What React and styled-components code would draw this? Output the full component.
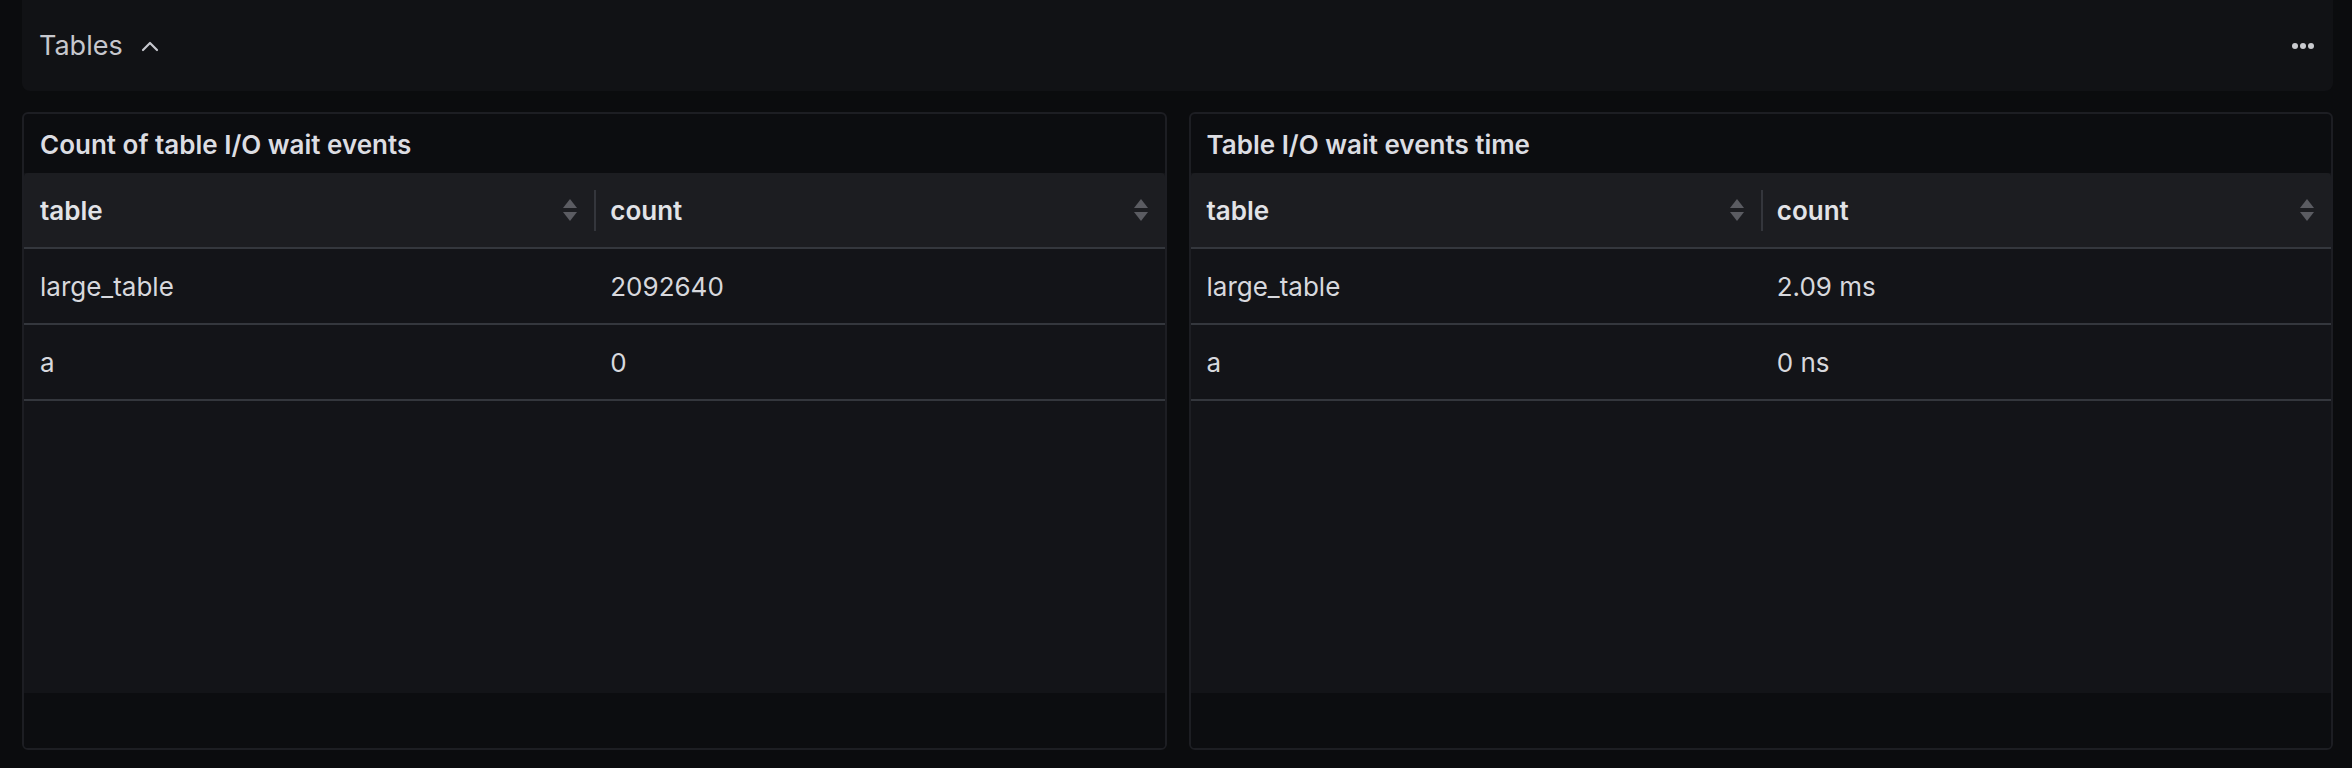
import React from "react";
import styled, { createGlobalStyle } from "styled-components";

const GlobalStyle = createGlobalStyle`
  html, body {
    margin: 0;
    padding: 0;
    background: #0b0c0e;
  }
  body {
    font-family: "Inter", "Noto Sans", sans-serif;
    color: #d8d9de;
  }
`;

const Page = styled.div`
  width: 2352px;
  height: 768px;
  box-sizing: border-box;
  padding: 0 19px 0 22px;
  display: flex;
  flex-direction: column;
  gap: 21px;
  background: #0b0c0e;
  overflow: hidden;
`;

const RowHeader = styled.div`
  height: 91px;
  background: #111215;
  border-radius: 0 0 8px 8px;
  display: flex;
  align-items: center;
  justify-content: space-between;
  padding: 0 14px 0 17px;
  box-sizing: border-box;
`;

const RowTitle = styled.div`
  display: flex;
  align-items: center;
  gap: 18px;
  font-size: 27px;
  color: #c6c7cd;
  font-weight: 400;
`;

const IconButton = styled.div`
  width: 32px;
  height: 32px;
  display: flex;
  align-items: center;
  justify-content: center;
`;

const Panels = styled.div`
  display: grid;
  grid-template-columns: 1fr 1fr;
  gap: 22px;
  height: 638px;
`;

const Panel = styled.section`
  border: 2px solid #1d1e23;
  border-radius: 6px;
  background: #0c0d10;
  display: flex;
  flex-direction: column;
  overflow: hidden;
`;

const PanelTitle = styled.h2`
  margin: 0;
  height: 59px;
  display: flex;
  align-items: center;
  padding: 2px 16px 0;
  box-sizing: border-box;
  font-size: 26px;
  font-weight: 600;
  color: #dcdde2;
`;

const Table = styled.div`
  flex: 1;
  background: #131418;
  display: flex;
  flex-direction: column;
`;

const HeaderRow = styled.div`
  display: grid;
  grid-template-columns: 1fr 1fr;
  height: 74px;
  background: #1c1d21;
  border-radius: 4px 4px 0 0;
  border-bottom: 2px solid #34373d;
`;

const HeaderCell = styled.div`
  display: flex;
  align-items: center;
  justify-content: space-between;
  padding: 0 17px 0 16px;
  font-size: 26px;
  font-weight: 600;
  color: #e2e3e7;
  position: relative;
  ${(p) =>
    p.$divided &&
    `
    &::before {
      content: "";
      position: absolute;
      left: 0;
      top: 17px;
      bottom: 16px;
      width: 2px;
      background: #34363c;
    }
  `}
`;

const BodyRow = styled.div`
  display: grid;
  grid-template-columns: 1fr 1fr;
  height: 74px;
  border-bottom: 2px solid #34373d;
`;

const Cell = styled.div`
  display: flex;
  align-items: center;
  padding: 0 16px;
  font-size: 26px;
  color: #d7d8dd;
`;

const Footer = styled.div`
  height: 55px;
  background: #0c0d10;
`;

const SortIcon = () => (
  <svg width="14" height="22" viewBox="0 0 14 22">
    <path d="M7 0 L14 9 L0 9 Z" fill="#5b5c62" />
    <path d="M0 13 L14 13 L7 22 Z" fill="#5b5c62" />
  </svg>
);

const ChevronUp = () => (
  <svg width="18" height="12" viewBox="0 0 18 12">
    <path
      d="M2 10 L9 3 L16 10"
      fill="none"
      stroke="#c6c7cd"
      strokeWidth="2.2"
      strokeLinecap="round"
      strokeLinejoin="round"
    />
  </svg>
);

const Dots = () => (
  <svg width="24" height="8" viewBox="0 0 24 8">
    <circle cx="4" cy="4" r="3" fill="#c9cace" />
    <circle cx="12" cy="4" r="3" fill="#c9cace" />
    <circle cx="20" cy="4" r="3" fill="#c9cace" />
  </svg>
);

const panels = [
  {
    title: "Count of table I/O wait events",
    rows: [
      ["large_table", "2092640"],
      ["a", "0"],
    ],
  },
  {
    title: "Table I/O wait events time",
    rows: [
      ["large_table", "2.09 ms"],
      ["a", "0 ns"],
    ],
  },
];

const App = () => {
  return (
    <>
      <GlobalStyle />
      <Page>
        <RowHeader>
          <RowTitle>
            Tables
            <ChevronUp />
          </RowTitle>
          <IconButton>
            <Dots />
          </IconButton>
        </RowHeader>
        <Panels>
          {panels.map((panel) => (
            <Panel key={panel.title}>
              <PanelTitle>{panel.title}</PanelTitle>
              <Table>
                <HeaderRow>
                  <HeaderCell>
                    table
                    <SortIcon />
                  </HeaderCell>
                  <HeaderCell $divided>
                    count
                    <SortIcon />
                  </HeaderCell>
                </HeaderRow>
                {panel.rows.map(([name, value]) => (
                  <BodyRow key={name}>
                    <Cell>{name}</Cell>
                    <Cell>{value}</Cell>
                  </BodyRow>
                ))}
              </Table>
              <Footer />
            </Panel>
          ))}
        </Panels>
      </Page>
    </>
  );
};

export default App;
